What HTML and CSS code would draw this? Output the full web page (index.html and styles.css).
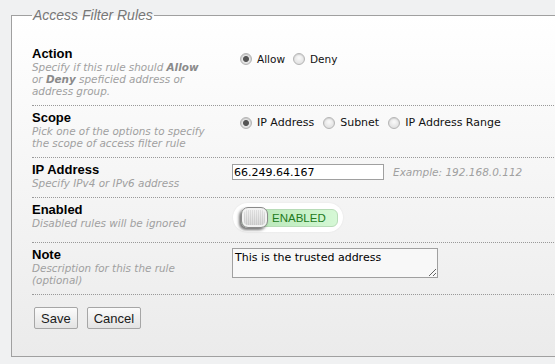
FILE: index.html
```html
<!DOCTYPE html>
<html lang="en">
<head>
    <meta charset="UTF-8">
    <title>Access Filter Rules</title>
    <link rel="stylesheet" href="styles.css">
</head>
<body>
    <fieldset class="rules">
        <legend>Access Filter Rules</legend>

        <div class="row">
            <div class="info">
                <div class="title">Action</div>
                <div class="desc">Specify if this rule should <b>Allow</b><br>or <b>Deny</b> speficied address or<br>address group.</div>
            </div>
            <div class="field radios">
                <label class="radio"><input type="radio" name="action" checked> Allow</label>
                <label class="radio"><input type="radio" name="action"> Deny</label>
            </div>
        </div>

        <div class="row">
            <div class="info">
                <div class="title">Scope</div>
                <div class="desc">Pick one of the options to specify the scope of access filter rule</div>
            </div>
            <div class="field radios scope">
                <label class="radio"><input type="radio" name="scope" checked> IP Address</label>
                <label class="radio"><input type="radio" name="scope"> Subnet</label>
                <label class="radio"><input type="radio" name="scope"> IP Address Range</label>
            </div>
        </div>

        <div class="row">
            <div class="info">
                <div class="title">IP Address</div>
                <div class="desc">Specify IPv4 or IPv6 address</div>
            </div>
            <div class="field inline">
                <input type="text" class="text" value="66.249.64.167">
                <span class="hint">Example: 192.168.0.112</span>
            </div>
        </div>

        <div class="row">
            <div class="info">
                <div class="title">Enabled</div>
                <div class="desc">Disabled rules will be ignored</div>
            </div>
            <div class="field">
                <label class="toggle">
                    <span class="track">
                        <span class="knob"></span>
                        <span class="state">ENABLED</span>
                    </span>
                </label>
            </div>
        </div>

        <div class="row">
            <div class="info">
                <div class="title">Note</div>
                <div class="desc">Description for this the rule (optional)</div>
            </div>
            <div class="field">
                <textarea class="note">This is the trusted address</textarea>
            </div>
        </div>

        <div class="actions">
            <button>Save</button>
            <button>Cancel</button>
        </div>
    </fieldset>
</body>
</html>
```

FILE: styles.css
```css
* {
    box-sizing: border-box;
}

html, body {
    margin: 0;
    padding: 0;
    overflow: hidden;
    background: #f0f1f2;
}

body {
    padding: 7px 0 0 11px;
    font-family: "DejaVu Sans", Verdana, sans-serif;
}

.rules {
    width: 620px;
    margin: 0;
    padding: 19px 0 27px 20px;
    border: 1px solid #a0a0a0;
    background: linear-gradient(#ffffff, #ebebeb);
}

.rules legend {
    padding: 0 1px;
    color: #777;
    font-family: "Liberation Sans", Arial, sans-serif;
    font-style: italic;
    font-size: 14px;
    line-height: 16px;
}

.row {
    display: grid;
    grid-template-columns: 200px 1fr;
    align-items: start;
    padding: 4px 0 8px;
    border-bottom: 1px dotted #999;
}

.info {
    padding-right: 22px;
}

.title {
    font-family: "Liberation Sans", Arial, sans-serif;
    font-weight: bold;
    font-size: 13px;
    line-height: 15px;
    color: #000;
}

.desc {
    font-style: italic;
    font-size: 10.4px;
    line-height: 12px;
    color: #a0a0a0;
}

.desc b {
    color: #8a8a8a;
}

.radios {
    display: flex;
    gap: 8px;
    margin-top: 7px;
    padding-left: 8px;
}

.scope {
    gap: 9px;
}

.radio {
    display: flex;
    align-items: center;
    gap: 5px;
    font-size: 10.5px;
    line-height: 12px;
    color: #111;
}

.scope .radio {
    font-size: 11px;
}

.radio input {
    appearance: none;
    width: 12px;
    height: 12px;
    margin: 0;
    border: 1px solid #b4b4b4;
    border-radius: 50%;
    background: radial-gradient(circle at 50% 40%, #fafafa, #d8d8d8);
    box-shadow: inset 0 1px 1px rgba(0,0,0,0.1);
}

.radio input:checked {
    background: radial-gradient(circle, #555 0, #555 2.5px, #e6e6e6 3.5px, #d0d0d0 6px);
}

.inline {
    display: flex;
    align-items: center;
    gap: 9px;
    margin-top: 2px;
}

.text {
    width: 152px;
    height: 16px;
    margin: 0;
    padding: 0 1px;
    border: 1px solid #a0a0a0;
    background: #fff;
    font-family: "DejaVu Sans", Verdana, sans-serif;
    font-size: 11px;
    color: #000;
}

.hint {
    font-style: italic;
    font-size: 10.5px;
    color: #a0a0a0;
}

.toggle {
    display: inline-flex;
    align-items: center;
    width: 110px;
    height: 29px;
    margin: 1px 0 2px 1px;
    padding: 0 5px 0 8px;
    border-radius: 15px;
    background: #fff;
    box-shadow: 0 0 2px rgba(0,0,0,0.08);
}

.track {
    display: flex;
    align-items: center;
    gap: 4px;
    width: 97px;
    height: 18px;
    border: 1px solid #b8dcb8;
    border-radius: 6px;
    background: linear-gradient(90deg, #b6e4b6, #c9f2c9 70%, #d6f8d6);
}

.knob {
    width: 27px;
    height: 21px;
    margin: -2px 0 -1px -1px;
    border: 1px solid #8a8a8a;
    border-radius: 7px;
    background:
        repeating-linear-gradient(90deg, rgba(0,0,0,0.08) 0 1px, transparent 1px 2px),
        linear-gradient(#f4f4f4, #d6d6d6);
    background-clip: padding-box;
    box-shadow: -2px 2px 3px rgba(0,0,0,0.55), inset 0 0 0 2px #f2f2f2;
}

.state {
    font-family: "Liberation Sans", Arial, sans-serif;
    font-size: 11.5px;
    color: #217a21;
}

.note {
    display: block;
    width: 206px;
    height: 30px;
    margin: 1px 0 0;
    padding: 2px 2px;
    border: 1px solid #a0a0a0;
    background: #f8f8f8;
    font-family: "DejaVu Sans", Verdana, sans-serif;
    font-size: 11px;
    line-height: 13px;
    color: #000;
    resize: vertical;
}

.actions {
    display: flex;
    gap: 9px;
    margin: 12px 0 0 2px;
}

.actions button {
    height: 22px;
    padding: 0 6px;
    border: 1px solid #a6a6a6;
    border-radius: 2px;
    background: linear-gradient(#fbfbfb, #e3e3e3);
    font-family: "Liberation Sans", Arial, sans-serif;
    font-size: 13px;
    color: #1a1a1a;
}
```
